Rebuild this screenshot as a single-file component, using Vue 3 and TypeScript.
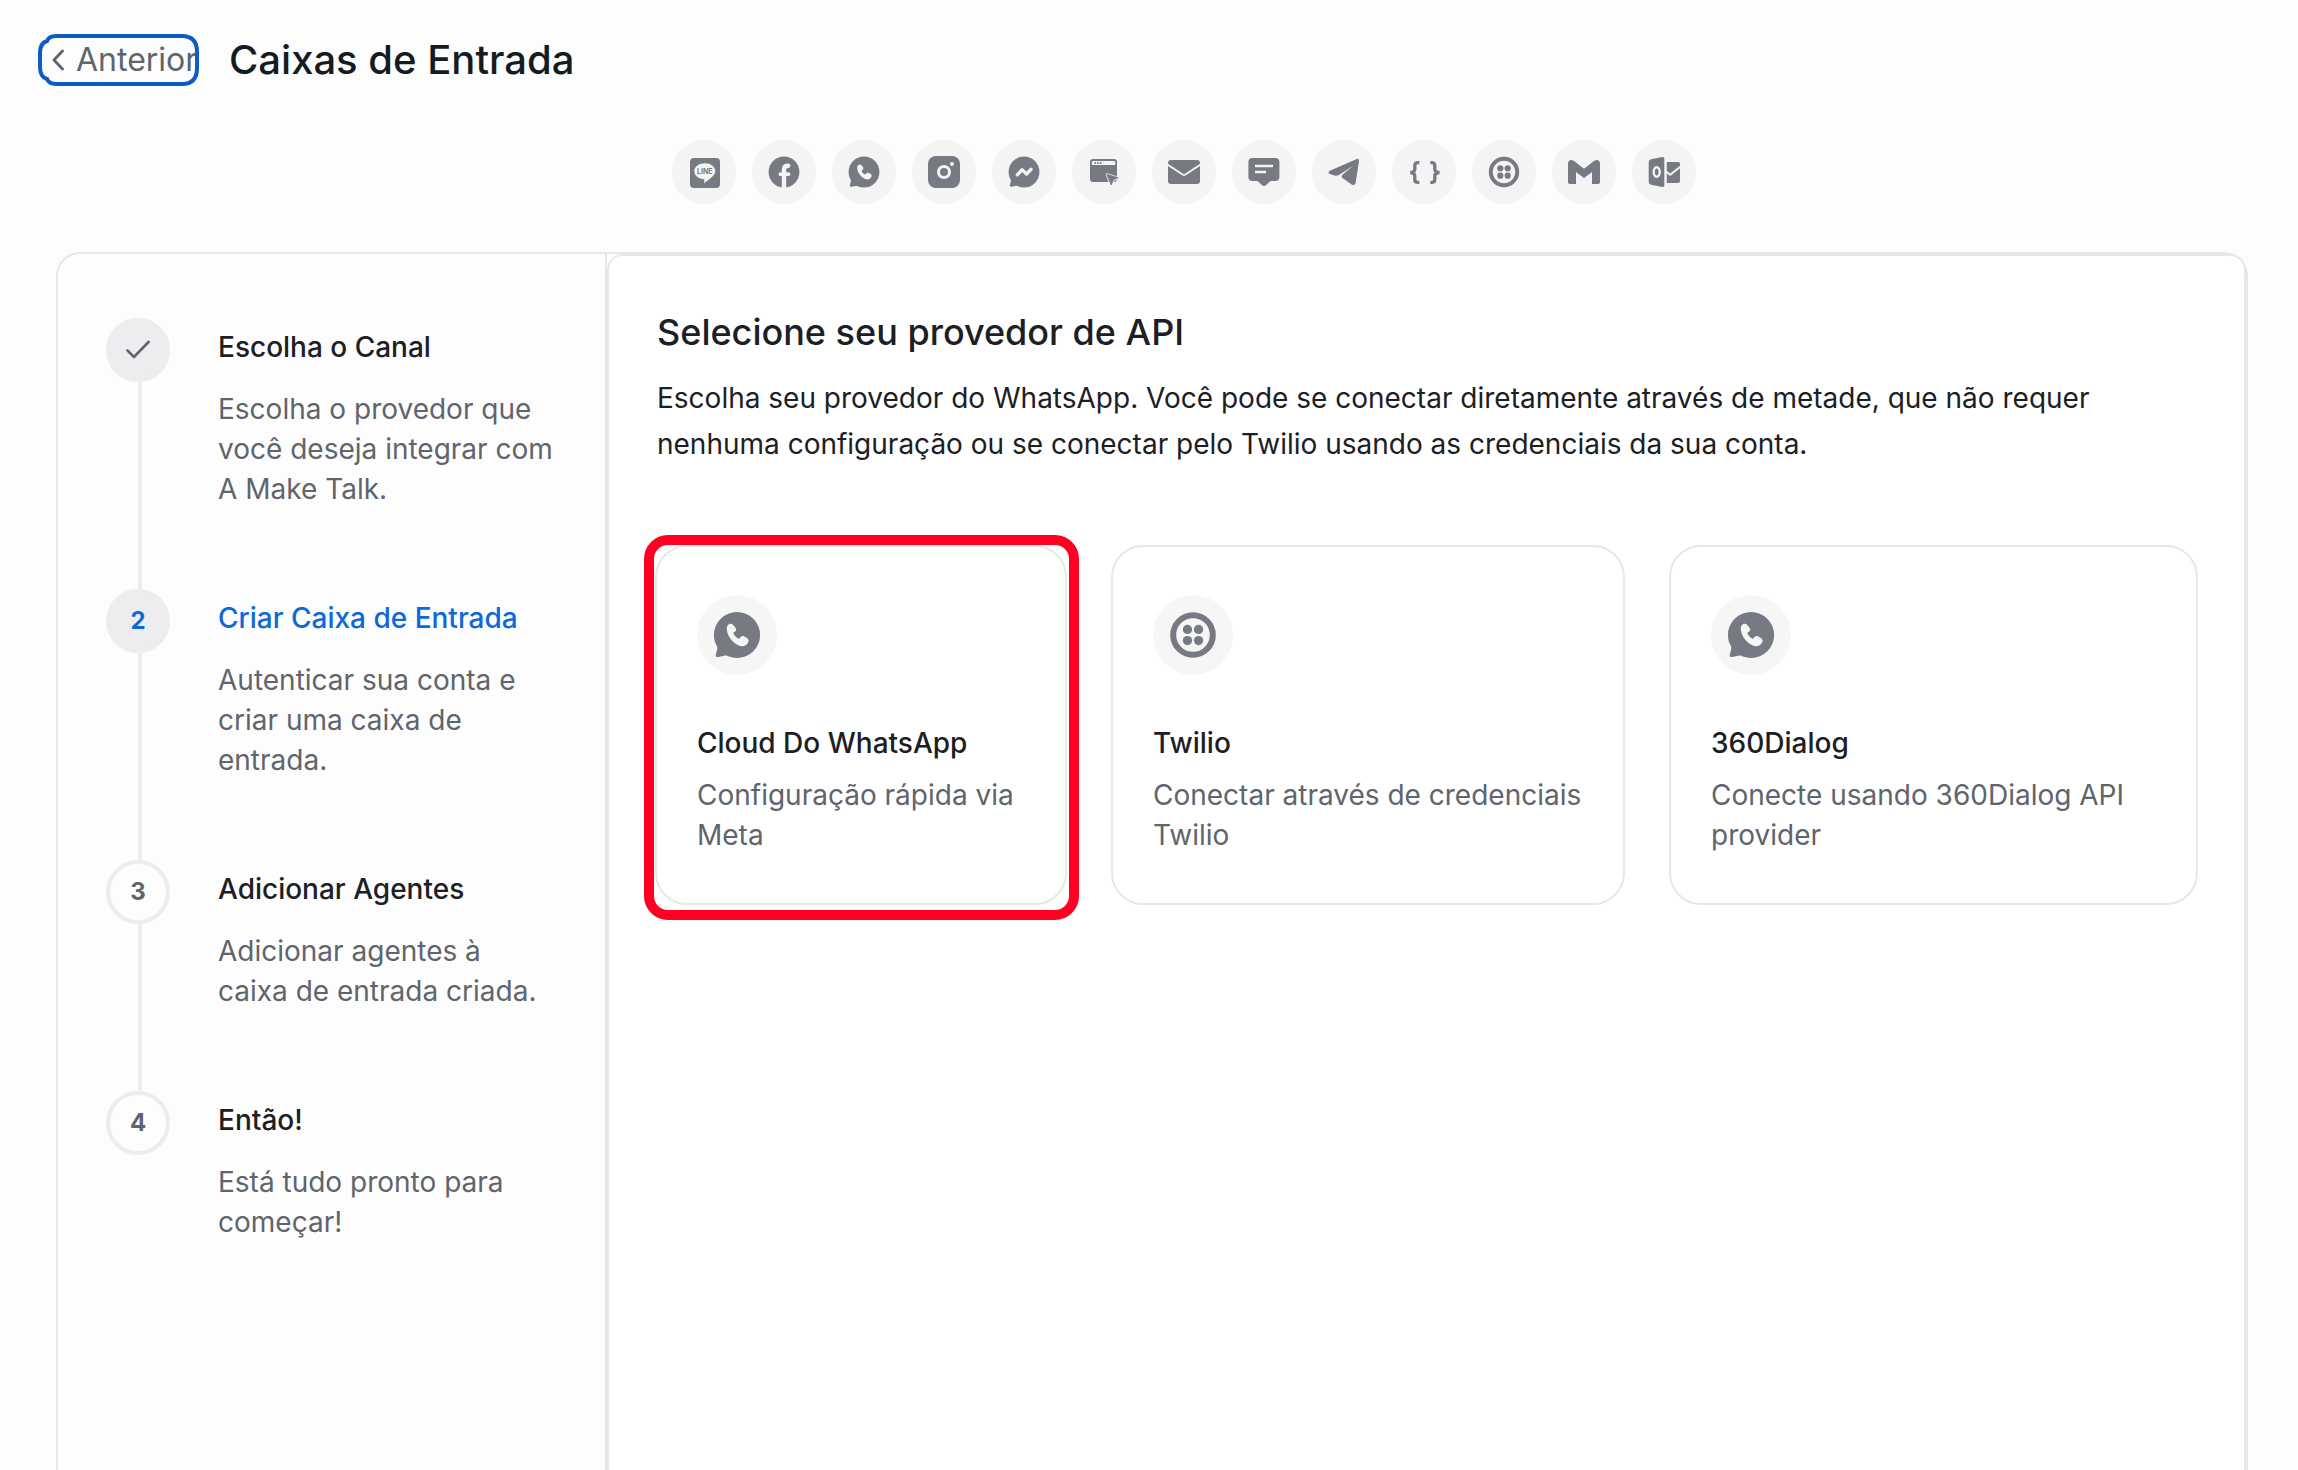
<script setup lang="ts">
import { defineComponent, h, type VNode } from 'vue'

type Shape = [tag: string, kind: 'ink' | 'cut' | 'line' | 'cutline', attrs: Record<string, string | number>, text?: string]

const bubble: Shape[] = [
  ['circle', 'ink', { cx: 16, cy: 16, r: 15.4 }],
  ['path', 'ink', { d: 'M3 23.5Q3 25.5 2 28.5Q1.2 31 3.5 30.7L10.5 29.2L9 20Z' }],
]

const icons: Record<string, Shape[]> = {
  line: [
    ['rect', 'ink', { x: 2, y: 2, width: 30, height: 30, rx: 4 }],
    ['path', 'cut', { d: 'M16.8 7.2C22.6 7.2 27.3 10.6 27.3 15.2C27.3 19.5 22 22.5 16.2 27.2V23.2C10.6 23 6.3 19.6 6.3 15.2C6.3 10.6 11 7.2 16.8 7.2Z' }],
    ['text', 'ink', { x: 16.8, y: 18, 'font-size': 7, 'font-weight': 700, 'text-anchor': 'middle' }, 'LINE'],
  ],
  facebook: [
    ['circle', 'ink', { cx: 16, cy: 16, r: 15.4 }],
    ['path', 'cutline', { d: 'M16 32V13.5Q16 9.8 20.2 9.8', 'stroke-width': 4.4, 'stroke-linecap': 'round' }],
    ['path', 'cutline', { d: 'M12.5 18.2H20.4', 'stroke-width': 3.8, 'stroke-linecap': 'round' }],
  ],
  whatsapp: [
    ...bubble,
    ['path', 'cut', { d: 'M9.2 12C9 9.8 10.5 8.5 11.8 8.5C13 8.5 14.3 9.8 15.4 12C15.8 13 15 13.8 13.6 14.4C13.6 15.8 15.5 18 17.4 18.6C18.5 17 19.3 16.4 20.6 16.8C23 17.8 24 19 23.7 20.3C23 22.4 21 23.7 19 23.5C14.5 22.8 9.4 17.5 9.2 12Z' }],
  ],
  instagram: [
    ['rect', 'ink', { x: 0, y: 0, width: 32, height: 32, rx: 8 }],
    ['circle', 'cutline', { cx: 16, cy: 16, r: 5.5, 'stroke-width': 3 }],
    ['circle', 'cut', { cx: 24, cy: 8, r: 2 }],
  ],
  messenger: [
    ...bubble,
    ['path', 'cutline', { d: 'M9.3 18.8L14 13.8L18.6 18L23 13.3', 'stroke-width': 3.4, 'stroke-linecap': 'round', 'stroke-linejoin': 'round' }],
  ],
  widget: [
    ['rect', 'ink', { x: 2, y: 3, width: 27, height: 23, rx: 3 }],
    ['path', 'cut', { d: 'M3.8 9V6.5Q3.8 5 5.3 5H25.8Q27.3 5 27.3 6.5V9Z' }],
    ['circle', 'ink', { cx: 7.2, cy: 7.1, r: 1 }],
    ['circle', 'ink', { cx: 9.9, cy: 7.1, r: 1 }],
    ['circle', 'ink', { cx: 12.6, cy: 7.1, r: 1 }],
    ['path', 'cutline', { d: 'M19 18.5L30 22L25.3 23.8L23 28.7Z', 'stroke-width': 2.6, 'stroke-linejoin': 'round' }],
    ['path', 'ink', { d: 'M18.8 18.2L30.2 21.8L25.4 23.8L23.2 29Z', stroke: 'currentColor', 'stroke-width': 0.8, 'stroke-linejoin': 'round' }],
  ],
  mail: [
    ['rect', 'ink', { x: 0, y: 4, width: 32, height: 24, rx: 3 }],
    ['path', 'cutline', { d: 'M-1 8.2L14.6 18.6Q16 19.6 17.4 18.6L33 8.2', 'stroke-width': 1.8 }],
  ],
  sms: [
    ['path', 'ink', { d: 'M4.5 2H27.2Q31.4 2 31.4 6V21Q31.4 25 27.2 25H22.5L18 29.2Q16 30.8 14 29.2L9.5 25H4.5Q.4 25 .4 21V6Q.4 2 4.5 2Z' }],
    ['path', 'cutline', { d: 'M7 10H25M7 16H18', 'stroke-width': 2.6 }],
  ],
  telegram: [
    ['path', 'ink', { d: 'M28.8 3L1.8 14.8Q-.8 16.6 1.8 18L6.5 19.6Q9 20 11 19L25 9.8L14.2 19Q13 20.5 14.5 22L24 28.7Q27 30 27.6 27L31 5Q31 2.3 28.8 3Z' }],
  ],
  api: [
    ['path', 'line', { d: 'M11.3 6.6H10Q6.8 6.6 6.8 9.6V13Q6.8 16.5 2.2 16.5Q6.8 16.5 6.8 20V23.4Q6.8 26.4 10 26.4H11.3', 'stroke-width': 3.3 }],
    ['path', 'line', { d: 'M22.3 6.6H23.6Q26.8 6.6 26.8 9.6V13Q26.8 16.5 31.6 16.5Q26.8 16.5 26.8 20V23.4Q26.8 26.4 23.6 26.4H22.3', 'stroke-width': 3.3 }],
  ],
  twilio: [
    ['circle', 'line', { cx: 16, cy: 16, r: 13.2, 'stroke-width': 4 }],
    ['circle', 'ink', { cx: 12.3, cy: 12.3, r: 3.1 }],
    ['circle', 'ink', { cx: 19.7, cy: 12.3, r: 3.1 }],
    ['circle', 'ink', { cx: 12.3, cy: 19.7, r: 3.1 }],
    ['circle', 'ink', { cx: 19.7, cy: 19.7, r: 3.1 }],
  ],
  gmail: [
    ['path', 'ink', { d: 'M0 7.5Q0 4 3.5 4Q4.8 4 6 5L16 12.7L26 5Q27.2 4 28.5 4Q32 4 32 7.5V26.2Q32 28 30.2 28H24V16L16 22L8 16V28H1.8Q0 28 0 26.2Z' }],
  ],
  outlook: [
    ['path', 'ink', { d: 'M3 3.2L14.2 1Q16.3 .8 16.3 2.8V29.2Q16.3 31.2 14.2 31L3 28.8Q.7 28.2 .7 26V6Q.7 3.8 3 3.2Z' }],
    ['ellipse', 'cutline', { cx: 8.7, cy: 16, rx: 3, ry: 4.8, 'stroke-width': 2.4 }],
    ['path', 'ink', { d: 'M18.8 6H30Q32 6 32 8V25Q32 27 30 27H18.8Z' }],
    ['path', 'cutline', { d: 'M18 15.5L22.2 18.8L33 10.2', 'stroke-width': 2 }],
  ],
}

const ChannelIcon = defineComponent({
  props: { name: { type: String, required: true } },
  setup(props) {
    const paint = {
      ink: { fill: 'currentColor' },
      cut: { fill: 'var(--chip)' },
      line: { fill: 'none', stroke: 'currentColor' },
      cutline: { fill: 'none', stroke: 'var(--chip)' },
    }
    return (): VNode =>
      h(
        'svg',
        { viewBox: '0 0 32 32', 'aria-hidden': 'true' },
        icons[props.name].map(([tag, kind, attrs, text]) => h(tag, { ...paint[kind], ...attrs }, text)),
      )
  },
})

const channels = Object.keys(icons)

interface Step {
  title: string
  text: string
  state: 'done' | 'active' | 'todo'
}
const steps: Step[] = [
  { title: 'Escolha o Canal', text: 'Escolha o provedor que você deseja integrar com A Make Talk.', state: 'done' },
  { title: 'Criar Caixa de Entrada', text: 'Autenticar sua conta e criar uma caixa de entrada.', state: 'active' },
  { title: 'Adicionar Agentes', text: 'Adicionar agentes à caixa de entrada criada.', state: 'todo' },
  { title: 'Então!', text: 'Está tudo pronto para começar!', state: 'todo' },
]

const providers = [
  { icon: 'whatsapp', title: 'Cloud Do WhatsApp', text: 'Configuração rápida via Meta', marked: true },
  { icon: 'twilio', title: 'Twilio', text: 'Conectar através de credenciais Twilio', marked: false },
  { icon: 'whatsapp', title: '360Dialog', text: 'Conecte usando 360Dialog API provider', marked: false },
]
</script>

<template>
  <div class="page">
    <header class="top">
      <button type="button" class="back">
        <svg class="chevron" viewBox="0 0 12 24" aria-hidden="true">
          <path d="M10.5 3L2 12L10.5 21" fill="none" stroke="currentColor" stroke-width="2.8" stroke-linecap="round" stroke-linejoin="round" />
        </svg>
        <span>Anterior</span>
        <svg class="ring" viewBox="0 0 161 52" aria-hidden="true">
          <path d="M18 2H144Q159 2 159 18V34Q159 50 144 50H18Q11 50 9 45Q2 43 2 33V19Q2 9 9 7Q11 2 18 2Z" fill="none" stroke="currentColor" stroke-width="4" />
        </svg>
      </button>
      <h1>Caixas de Entrada</h1>
    </header>

    <ul class="channels" aria-label="Canais">
      <li v-for="name in channels" :key="name" class="chip">
        <ChannelIcon :name="name" />
      </li>
    </ul>

    <div class="wizard">
      <ol class="steps">
        <li v-for="(step, i) in steps" :key="step.title" class="step" :class="step.state">
          <div class="rail">
            <span class="badge">
              <svg v-if="step.state === 'done'" viewBox="0 0 24 24" aria-hidden="true">
                <path d="M1.5 12.5L8 19L22.5 4" fill="none" stroke="currentColor" stroke-width="2.6" stroke-linecap="round" stroke-linejoin="round" />
              </svg>
              <template v-else>{{ i + 1 }}</template>
            </span>
          </div>
          <div class="step-body">
            <h3>{{ step.title }}</h3>
            <p>{{ step.text }}</p>
          </div>
        </li>
      </ol>

      <main class="panel">
        <div class="intro">
          <h2>Selecione seu provedor de API</h2>
          <p class="lead">
            Escolha seu provedor do WhatsApp. Você pode se conectar diretamente através de metade, que não requer
            nenhuma configuração ou se conectar pelo Twilio usando as credenciais da sua conta.
          </p>
        </div>
        <div class="providers">
          <button v-for="p in providers" :key="p.title" type="button" class="card" :class="{ marked: p.marked }">
            <span class="chip large"><ChannelIcon :name="p.icon" /></span>
            <span class="card-title">{{ p.title }}</span>
            <span class="card-text">{{ p.text }}</span>
          </button>
        </div>
      </main>
    </div>
  </div>
</template>

<style>
body {
  margin: 0;
  background: #fdfdfd;
}
</style>

<style scoped>
.page {
  box-sizing: border-box;
  display: flex;
  flex-direction: column;
  height: 100vh;
  overflow: hidden;
  background: #fdfdfd;
  color: #1c2024;
  font-family: Inter, 'Liberation Sans', sans-serif;
  font-size: 28px;
  line-height: 40px;
}
h1,
h2,
h3,
p,
ul,
ol {
  margin: 0;
  padding: 0;
  font-weight: 400;
  list-style: none;
}
button {
  border: 0;
  background: none;
  color: inherit;
  font: inherit;
  text-align: left;
  cursor: pointer;
}
.top {
  display: flex;
  align-items: center;
  gap: 30px;
  height: 120px;
  padding: 0 38px;
}
.back {
  position: relative;
  display: flex;
  align-items: center;
  gap: 12px;
  box-sizing: border-box;
  width: 161px;
  height: 52px;
  padding: 0 0 0 14px;
  color: #60646c;
  font-size: 32px;
  white-space: nowrap;
}
.back:focus {
  outline: none;
}
.back span {
  overflow: hidden;
}
.chevron {
  flex: none;
  width: 12px;
  height: 24px;
}
.ring {
  position: absolute;
  inset: 0;
  width: 161px;
  height: 52px;
  color: #0d5bc4;
}
h1 {
  color: #151b22;
  font-size: 40px;
  font-weight: 500;
  line-height: 52px;
}
.channels {
  display: flex;
  justify-content: center;
  gap: 16px;
  padding: 20px 0 48px 70px;
}
.chip {
  --chip: #f4f4f4;
  display: flex;
  align-items: center;
  justify-content: center;
  width: 64px;
  height: 64px;
  border-radius: 50%;
  background: var(--chip);
  color: #777983;
}
.chip svg {
  width: 32px;
  height: 32px;
}
.chip.large {
  --chip: #f6f6f6;
  width: 80px;
  height: 80px;
  margin-bottom: 48px;
}
.chip.large svg {
  width: 48px;
  height: 48px;
}
.wizard {
  display: grid;
  flex: 1;
  grid-template-columns: 549px 1fr;
  margin: 0 50px 0 56px;
  border: 2px solid #e7e7e7;
  border-bottom: 0;
  border-radius: 24px 24px 0 0;
}
.steps {
  padding: 64px 47px 64px 48px;
  border-right: 2px solid #e7e7e7;
}
.step {
  display: flex;
  gap: 48px;
}
.rail {
  display: flex;
  flex: none;
  flex-direction: column;
  align-items: center;
  width: 64px;
}
.step:not(:last-child) .rail::after {
  flex: 1;
  width: 4px;
  margin-left: 4px;
  background: #ededf0;
  content: '';
}
.badge {
  display: flex;
  align-items: center;
  justify-content: center;
  box-sizing: border-box;
  width: 64px;
  height: 64px;
  border: 4px solid #ededf0;
  border-radius: 50%;
  color: #60646c;
  font-size: 24px;
  font-weight: 700;
}
.badge svg {
  width: 24px;
  height: 24px;
}
.done .badge,
.active .badge {
  background: #ededf0;
}
.active .badge,
.active h3 {
  color: #0d68d8;
}
.step-body {
  flex: 1;
  padding: 9px 0 80px;
}
h3 {
  margin-bottom: 22px;
  font-size: 28px;
  font-weight: 500;
}
.step-body p,
.card-text {
  color: #60646c;
}
.panel {
  padding: 48px 46px;
  border: 2px solid #e7e7e7;
  border-bottom: 0;
  border-radius: 16px 16px 0 0;
  background: #fff;
}
.intro {
  padding: 0 2px;
}
h2 {
  margin-bottom: 15px;
  font-size: 36px;
  font-weight: 500;
  line-height: 56px;
}
.lead {
  line-height: 46px;
}
.providers {
  display: grid;
  grid-template-columns: 412fr 514fr 529fr;
  gap: 44px;
  margin-top: 78px;
}
.card {
  position: relative;
  display: flex;
  flex-direction: column;
  align-items: flex-start;
  padding: 48px 40px;
  border: 2px solid #e7e7e7;
  border-radius: 32px;
  background: #fff;
}
.card-title {
  margin-bottom: 12px;
  font-weight: 500;
}
.marked::after {
  position: absolute;
  inset: -12px -14px -17px -13px;
  border: 10px solid #ff0022;
  border-radius: 24px;
  content: '';
}
</style>
